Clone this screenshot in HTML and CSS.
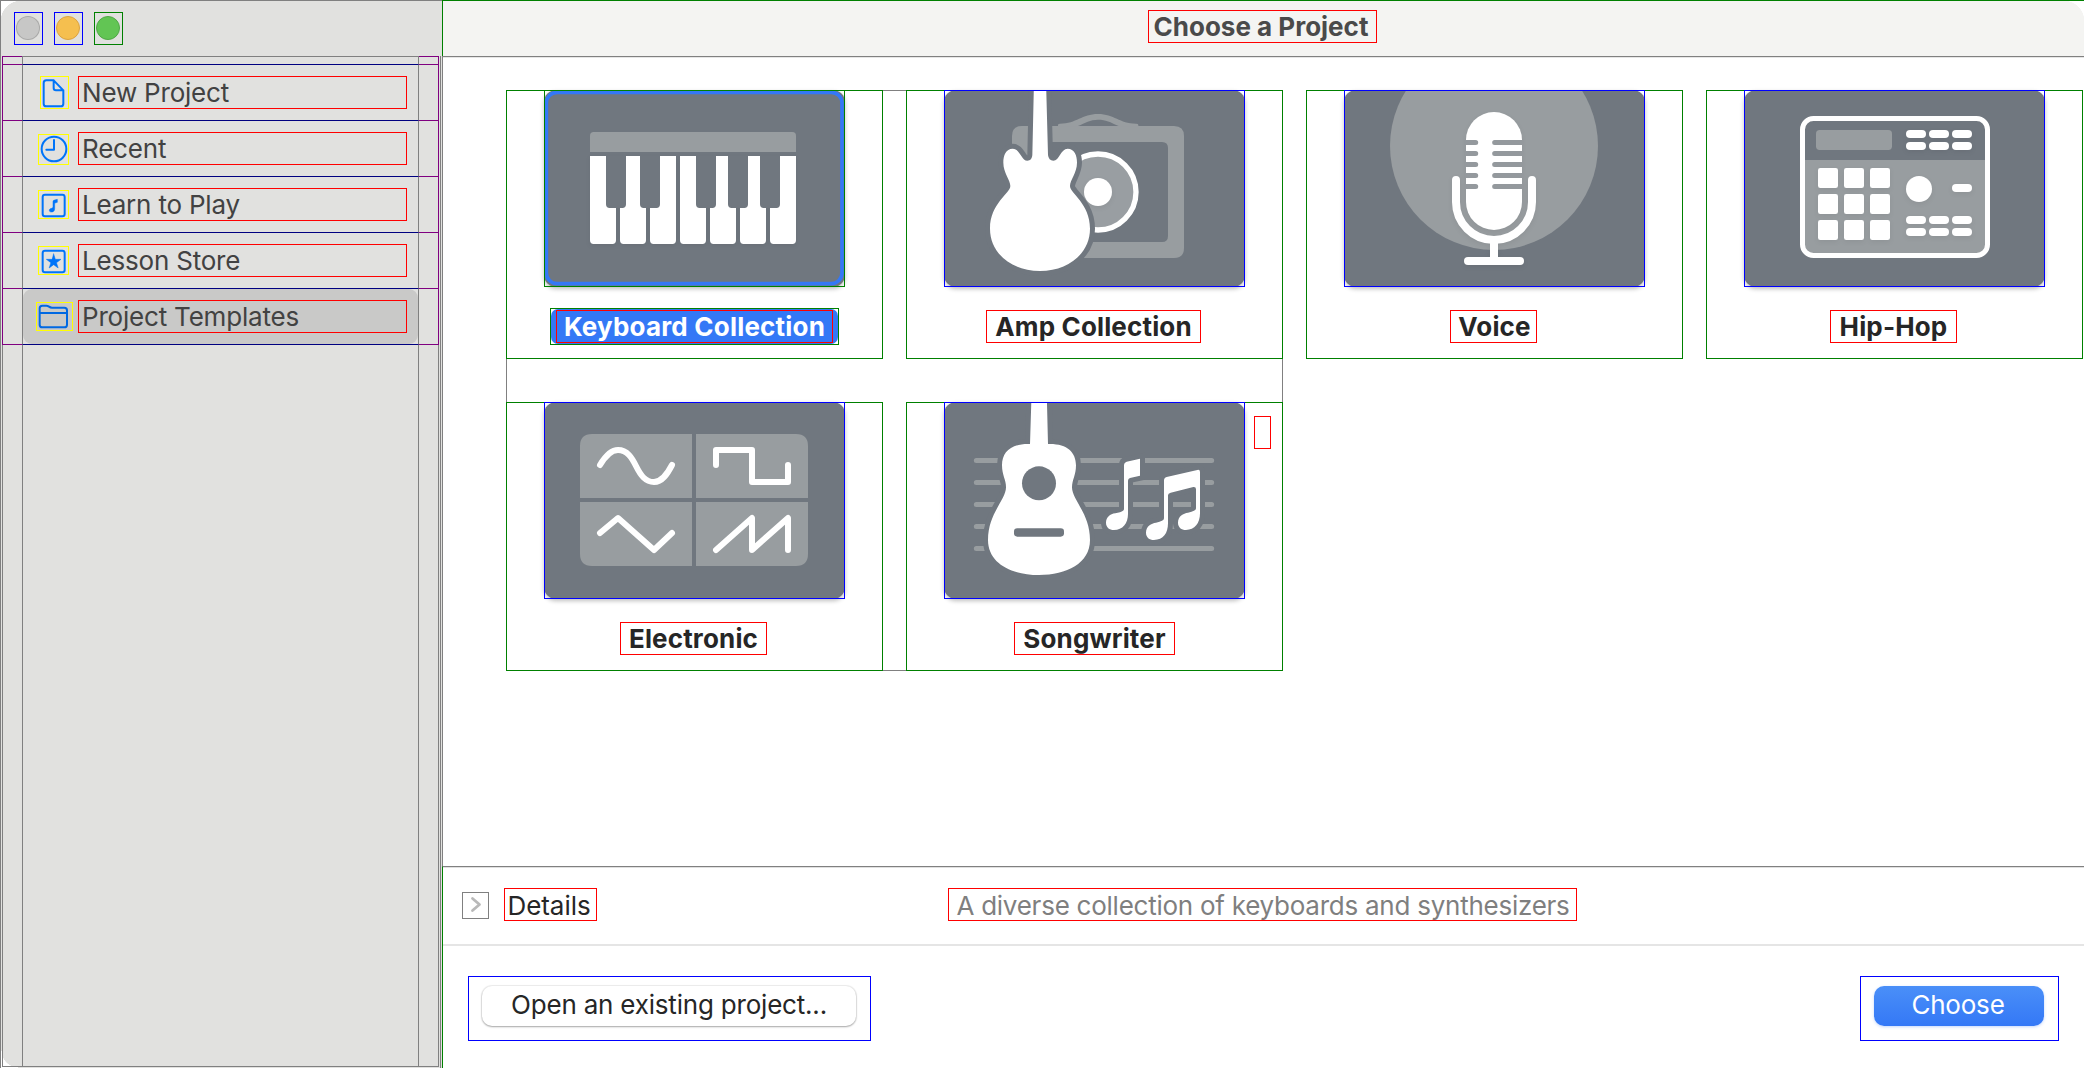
FILE: index.html
```html
<!DOCTYPE html>
<html lang="en">
<head>
<meta charset="utf-8">
<title>Choose a Project</title>
<link rel="stylesheet" href="styles.css">
</head>
<body>
<div class="window">
  <aside class="sidebar">
    <div class="traffic">
      <span class="light close"><i></i></span>
      <span class="light minimize"><i></i></span>
      <span class="light zoom"><i></i></span>
    </div>
    <div class="table">
      <div class="table-head"><div></div></div>
      <ul class="rows">
        <li class="row"><div class="cell">
          <span class="slot"><svg class="icon doc" viewBox="120 228 87 99"><path d="M161 241H139Q131 241 131 249V311Q131 319 139 319H182Q190 319 190 311V271ZM161 241V264Q161 271 168 271H190"/></svg></span>
          <span class="name">New Project</span>
        </div></li>
        <li class="row"><div class="cell">
          <span class="slot"><svg class="icon clock" viewBox="114 402 93 93"><circle cx="162" cy="447" r="37"/><path d="M162 420V449H139"/></svg></span>
          <span class="name">Recent</span>
        </div></li>
        <li class="row"><div class="cell">
          <span class="slot"><svg class="icon square" viewBox="114 570 93 87"><rect x="128" y="584" width="66" height="65" rx="7"/><path class="solid" d="M159 604Q159 602 161 601L172 598V607L165 609Q164 610 164 612V626C164 633 160 636 154 636C150 636 148 634 148 631C148 627 151 626 155 625Q159 624 159 621Z"/></svg></span>
          <span class="name">Learn to Play</span>
        </div></li>
        <li class="row"><div class="cell">
          <span class="slot"><svg class="icon square" viewBox="114 738 93 87"><rect x="128" y="752" width="66" height="65" rx="7"/><path class="solid" d="M161 762L166 778H183L169.500 788L174.500 804L161 794L147.500 804L152.500 788L139 778H156Z"/></svg></span>
          <span class="name">Lesson Store</span>
        </div></li>
        <li class="row selected"><div class="cell">
          <span class="slot"><svg class="icon folder" viewBox="108 906 111 87"><path d="M119 974V925Q119 917 127 917H139Q143 917 147 920Q151 923 156 923H193Q201 923 201 931V974Q201 982 193 982H127Q119 982 119 974ZM119 939H201"/></svg></span>
          <span class="name">Project Templates</span>
        </div></li>
      </ul>
      <div class="table-rest"><div></div></div>
    </div>
  </aside>

  <main class="main">
    <header class="titlebar"><h1 class="tag title">Choose a Project</h1></header>

    <section class="content">
      <div class="cards">
        <article class="card selected">
          <div class="picture">
            <svg viewBox="132 30 903 591">
              <rect class="edge" x="139" y="37" width="887" height="574" rx="32"/>
              <path class="soft" d="M270 216V167Q270 156 281 156H877Q888 156 888 167V216Z"/>
              <g class="white">
                <path d="M270 228H348V481Q348 492 337 492H281Q270 492 270 481ZM360 228H438V481Q438 492 427 492H371Q360 492 360 481ZM450 228H528V481Q528 492 517 492H461Q450 492 450 481ZM540 228H618V481Q618 492 607 492H551Q540 492 540 481ZM630 228H708V481Q708 492 697 492H641Q630 492 630 481ZM720 228H798V481Q798 492 787 492H731Q720 492 720 481ZM810 228H888V481Q888 492 877 492H821Q810 492 810 481Z"/>
              </g>
              <path class="slate" d="M318 226H378V373Q378 384 367 384H329Q318 384 318 373ZM420 226H480V373Q480 384 469 384H431Q420 384 420 373ZM588 226H648V373Q648 384 637 384H599Q588 384 588 373ZM684 226H744V373Q744 384 733 384H695Q684 384 684 373ZM780 226H840V373Q840 384 829 384H791Q780 384 780 373Z"/>
            </svg>
          </div>
          <div class="chip"><span class="tag label kb">Keyboard Collection</span></div>
        </article>

        <article class="card">
          <div class="picture">
            <svg viewBox="132 30 903 591">
              <path class="soft" fill-rule="evenodd" d="M366 138H822Q852 138 852 168V504Q852 534 822 534H366Q336 534 336 504V168Q336 138 366 138ZM384 186V486H786Q804 486 804 468V204Q804 186 786 186Z"/>
              <path class="soft" fill-rule="evenodd" d="M474 139V135Q474 131 480 131C530 131 545 102 594 102C643 102 658 131 708 131Q715 131 715 135V139ZM534 138H656C630 126 618 119 594 119C570 119 556 129 534 138Z"/>
              <circle cx="594" cy="336" r="114" fill="#999ea2" stroke="#fff" stroke-width="16"/>
              <circle class="white" cx="594" cy="336" r="42"/>
              <path class="halo" d="M402 0H438L444 225Q446 242 460 242C478 242 482 206 503 206C523 206 531 226 531 248C531 278 510 300 510 318C510 340 570 370 570 446C570 520 505 573 420 573C335 573 270 520 270 446C270 370 331 340 331 318C331 300 310 278 310 248C310 226 318 206 338 206C360 206 364 242 382 242Q396 242 397 225Z"/>
            </svg>
          </div>
          <span class="tag label amp">Amp Collection</span>
        </article>

        <article class="card">
          <div class="picture">
            <svg viewBox="132 30 903 591">
              <circle class="soft" cx="582" cy="198" r="312"/>
              <g class="white">
                <rect x="498" y="96" width="168" height="354" rx="84"/>
                <path d="M468 300V366A114 114 0 0 0 696 366V300" fill="none" stroke="#fff" stroke-width="24" stroke-linecap="round"/>
                <rect x="570" y="480" width="24" height="60"/>
                <rect x="492" y="531" width="180" height="24" rx="12"/>
              </g>
              <path d="M494 187.500H527M584 187.500H670M494 220.500H527M584 220.500H670M494 253.500H527M584 253.500H670M494 286.500H527M584 286.500H670M494 319.500H527M584 319.500H670" stroke="#94999d" stroke-width="15"/>
              <path d="M527 187.500h.1M584 187.500h.1M527 220.500h.1M584 220.500h.1M527 253.500h.1M584 253.500h.1M527 286.500h.1M584 286.500h.1M527 319.500h.1M584 319.500h.1" stroke="#94999d" stroke-width="15" stroke-linecap="round"/>
            </svg>
          </div>
          <span class="tag label voice">Voice</span>
        </article>

        <article class="card">
          <div class="picture">
            <svg viewBox="180 30 903 591">
              <path class="soft" d="M360 240H906V490Q906 524 872 524H392Q360 524 360 490Z"/>
              <rect class="soft" x="396" y="150" width="228" height="60" rx="11"/>
              <rect x="355.500" y="115.500" width="555" height="411" rx="33" fill="none" stroke="#fff" stroke-width="15"/>
              <g class="white">
                <rect x="402" y="264" width="60" height="60" rx="7"/><rect x="480" y="264" width="60" height="60" rx="7"/><rect x="558" y="264" width="60" height="60" rx="7"/>
                <rect x="402" y="342" width="60" height="60" rx="7"/><rect x="480" y="342" width="60" height="60" rx="7"/><rect x="558" y="342" width="60" height="60" rx="7"/>
                <rect x="402" y="420" width="60" height="60" rx="7"/><rect x="480" y="420" width="60" height="60" rx="7"/><rect x="558" y="420" width="60" height="60" rx="7"/>
                <rect x="666" y="150" width="60" height="24" rx="12"/><rect x="735" y="150" width="60" height="24" rx="12"/><rect x="804" y="150" width="60" height="24" rx="12"/>
                <rect x="666" y="186" width="60" height="24" rx="12"/><rect x="735" y="186" width="60" height="24" rx="12"/><rect x="804" y="186" width="60" height="24" rx="12"/>
                <circle cx="705" cy="327" r="39"/><rect x="804" y="312" width="60" height="24" rx="12"/>
                <rect x="666" y="408" width="60" height="24" rx="12"/><rect x="735" y="408" width="60" height="24" rx="12"/><rect x="804" y="408" width="60" height="24" rx="12"/>
                <rect x="666" y="444" width="60" height="24" rx="12"/><rect x="735" y="444" width="60" height="24" rx="12"/><rect x="804" y="444" width="60" height="24" rx="12"/>
              </g>
            </svg>
          </div>
          <span class="tag label hiphop">Hip-Hop</span>
        </article>

        <article class="card">
          <div class="picture">
            <svg viewBox="132 36 903 591">
              <path class="soft" d="M240 324V168Q240 132 276 132H576V324ZM588 132H888Q924 132 924 168V324H588ZM240 336H576V528H276Q240 528 240 492ZM588 336H924V492Q924 528 888 528H588Z"/>
              <g class="wave">
                <path d="M300 225C318 195 334 180 354 180C382 180 396 204 408 228C422 256 436 276 462 276C486 276 502 252 516 225"/>
                <path d="M648 225V180H756V276H864V225"/>
                <path d="M300 429L354 384L462 480L516 429"/>
                <path d="M648 480L756 384V480L864 384V480"/>
              </g>
            </svg>
          </div>
          <span class="tag label electronic">Electronic</span>
        </article>

        <article class="card">
          <div class="picture">
            <svg viewBox="132 36 903 591">
              <path d="M229 211.500H935M229 277.500H935M229 343.500H935M229 409.500H935M229 475.500H935" stroke="#989da0" stroke-width="15" stroke-linecap="round"/>
              <g>
                <path class="halo" d="M395 0H440L444 162C500 160 528 186 528 226C528 255 516 270 516 292C516 330 570 370 570 450C570 520 500 555 417 555C334 555 264 520 264 450C264 370 318 330 318 292C318 270 306 255 306 226C306 186 334 160 390 162Z"/>
                <path class="halo" d="M672 225Q672 217 680 215L720 206V257L690 264Q684 266 684 272V372C684 400 668 420 642 420C628 420 618 412 618 398C618 382 630 372 646 370L660 367Q672 363 672 357Z"/>
                <path class="halo" d="M792 272Q792 263 800 261L892 240Q900 238 900 246V370C900 400 884 420 858 420C844 420 834 412 834 398C834 378 850 370 864 368Q888 364 888 355V298Q888 290 880 291L812 308Q804 310 804 316V400C804 430 790 450 762 450C748 450 738 442 738 428C738 408 754 400 768 398Q792 394 792 385Z"/>
              </g>
              <circle class="slate" cx="417" cy="280" r="51"/>
              <rect class="slate" x="342" y="415" width="150" height="25" rx="10"/>
            </svg>
          </div>
          <span class="tag label songwriter">Songwriter</span>
          <span class="blank"></span>
        </article>
      </div>
    </section>

    <footer class="footer">
      <div class="details">
        <span class="disclosure"><svg viewBox="0 0 27 27"><path d="M10.500 6.500L17.500 12.500L10.500 18.500"/></svg></span>
        <span class="tag details-label">Details</span>
        <span class="tag summary">A diverse collection of keyboards and synthesizers</span>
      </div>
      <div class="actions">
        <div class="hit"><button class="button open">Open an existing project...</button></div>
        <div class="hit"><button class="button choose">Choose</button></div>
      </div>
    </footer>
  </main>
</div>
</body>
</html>
```
FILE: styles.css
```css
* { box-sizing: border-box; }
body { margin: 0; background: #fff; color: #262626; font: 26px/31px Inter, "Liberation Sans", sans-serif; }
ul { list-style: none; margin: 0; padding: 0; }
h1 { margin: 0; }
svg { display: block; }

.window { display: grid; grid-template-columns: 442px 1fr; width: 2084px; height: 1068px; overflow: hidden; }

/* Sidebar */
.sidebar { display: flex; flex-direction: column; border-top: 1px solid #808080; border-left: 1px solid #808080;
  background: linear-gradient(#808080, #808080) 439px 55px / 1px 1012px no-repeat, #e1e1df;
  padding-left: 1px; position: relative; }
.sidebar::before { content: ""; position: absolute; inset: 0; pointer-events: none;
  background: radial-gradient(circle at 20px 20px, transparent 20px, #fff 20.500px) 0 0 / 20px 20px no-repeat,
    radial-gradient(circle at 17px 0, transparent 16px, #fff 16.500px) 0 100% / 17px 17px no-repeat; }
.traffic { display: flex; gap: 11px; height: 55px; flex: none; padding: 11px 0 0 12px; }
.light { width: 29px; height: 33px; border: 1px solid blue; display: grid; place-items: center; padding: 0 1px 1px 0; }
.light i { width: 24px; height: 24px; border-radius: 50%; border: 1px solid rgba(0,0,0,.15); }
.close i { background: #c7c7c6; }
.minimize i { background: #f5bf4f; border-color: #dba341; }
.zoom i { background: #62c554; border-color: #50a846; }
.zoom { border-color: green; }

.table { width: 437px; height: 1011px; display: flex; flex-direction: column; position: relative; }
.table-head { height: 9px; border: 1px solid purple; padding: 0 19px; }
.table-head div { height: 9px; margin-top: -1px; border: 1px solid #808080; border-bottom-color: navy; }
.row { height: 56px; border: 1px solid purple; border-top: 0; padding: 0 19px; }
.cell { height: 56px; display: flex; align-items: center; padding-left: 13px;
  border: 1px solid #808080; border-top: 0; border-bottom-color: navy; position: relative; z-index: 0; }
.row.selected .cell::before { content: ""; position: absolute; inset: 0; z-index: -1; border-radius: 9px; background: #c9c9c8; }
.slot { width: 37px; margin-right: 5px; display: flex; justify-content: center; flex: none; }
.icon { outline: 1px solid yellow; outline-offset: -1px; fill: none; stroke: #0074f8; stroke-width: 6; stroke-linecap: round; stroke-linejoin: round; }
.icon .solid { fill: #0074f8; stroke-width: 1.500; }
.doc { width: 29px; height: 33px; }
.clock { width: 31px; height: 31px; margin: 2px 2px 0 0; }
.square { width: 31px; height: 29px; margin-right: 2px; }
.folder { width: 37px; height: 29px; stroke: #0068e2; }
.name { width: 329px; height: 33px; border: 1px solid red; padding-left: 3px; color: #424242; letter-spacing: -.2px; }
.table-rest { flex: 1; border: 1px solid #808080; border-top: 0; padding: 0 19px; }
.table-rest div { height: 100%; border: solid #808080; border-width: 0 1px; }

/* Main pane */
.main { display: grid; grid-template-rows: 56px 810px 1fr; min-width: 0; }
.titlebar { border-top: 1px solid green; border-left: 1px solid green; display: flex; justify-content: center; padding: 9px 2px 0 0;
  background: radial-gradient(circle at 0 20px, #f4f4f2 20px, #fff 20.500px) 100% 0 / 20px 20px no-repeat,
    linear-gradient(#f4f4f2, #f4f4f2) 0 0 / calc(100% - 20px) 100% no-repeat,
    linear-gradient(#f4f4f2, #f4f4f2) 0 20px / 100% 100% no-repeat; }
.tag { height: 33px; border: 1px solid red; display: block; text-align: center; white-space: nowrap; font-size: 26px; line-height: 31px; }
.title { width: 229px; font-weight: 700; color: #4a4a4a; padding-right: 3px; }

.content { border-top: 1px solid #808080; border-left: 1px solid #808080; padding: 33px 0 0 63px; box-shadow: inset 0 1px #e6e6e6; }
.cards { display: grid; grid-template: repeat(2, 269px) / repeat(4, 377px); gap: 43px 23px; }
.cards::before { content: ""; grid-area: 1 / 1 / 3 / 3; border: 1px solid #808080; }
.card { grid-row: 1; border: 1px solid green; display: flex; flex-direction: column; align-items: center; position: relative; }
.card:nth-child(1), .card:nth-child(5) { grid-column: 1; }
.card:nth-child(2), .card:nth-child(6) { grid-column: 2; }
.card:nth-child(3) { grid-column: 3; }
.card:nth-child(4) { grid-column: 4; }
.card:nth-child(n+5) { grid-row: 2; }
.picture { width: 301px; height: 197px; margin-top: -1px; flex: none; outline: 1px solid blue; outline-offset: -1px; }
.picture svg { width: 301px; height: 197px; border-radius: 12px; background: #70777f; box-shadow: 0 2px 4px rgba(0,0,0,.25); }
.card.selected .picture { outline-color: green; }
.soft { fill: #989da0; }
.slate { fill: #70777f; }
.white { fill: #fff; filter: drop-shadow(0 6px 8px rgba(0,0,0,.06)); }
.halo { fill: #fff; stroke: #70777f; stroke-width: 30; paint-order: stroke; }
.edge { fill: none; stroke: #3478f6; stroke-width: 11; }
.wave { fill: none; stroke: #fff; stroke-width: 18; stroke-linecap: round; stroke-linejoin: round; }
.label { margin-top: 23px; margin-right: 2px; font-weight: 700; letter-spacing: .15px; }
.chip { width: 289px; height: 37px; margin-top: 21px; border: 1px solid green; padding: 1px 5px; position: relative; z-index: 0; }
.chip::before { content: ""; position: absolute; inset: 0; z-index: -1; border-radius: 7px; background: #3478f6; }
.chip .label { margin: 0; color: #fff; letter-spacing: .2px; }
.amp { width: 215px; }
.voice { width: 87px; padding-left: 2px; }
.hiphop { width: 127px; }
.electronic { width: 147px; }
.songwriter { width: 161px; margin-right: 0; }
.blank { position: absolute; left: 347px; top: 13px; width: 17px; height: 33px; border: 1px solid red; }

/* Footer */
.footer { border-top: 1px solid #808080; border-left: 1px solid green; box-shadow: inset 0 1px #e0e0e0; }
.details { display: flex; align-items: flex-start; height: 79px; padding: 21px 0 0 19px; border-bottom: 2px solid #e5e5e5; }
.disclosure { width: 27px; height: 27px; margin: 4px 15px 0 0; border: 1px solid #808080; }
.disclosure svg { margin: -1px; width: 27px; height: 27px; fill: none; stroke: #b9b9b9; stroke-width: 2.800; stroke-linecap: round; stroke-linejoin: round; }
.details .tag { line-height: 33px; }
.details-label { width: 93px; padding-right: 3px; letter-spacing: -.05px; }
.summary { width: 629px; margin-left: 351px; padding-left: 1px; color: #7f7f7f; letter-spacing: -.25px; }
.actions { display: flex; justify-content: space-between; padding: 30px 25px 0; }
.hit { border: 1px solid blue; height: 65px; padding: 9px 14px 0 13px; }
.button { display: block; height: 40px; border: 0; border-radius: 10px; font: 26px/38px Inter, "Liberation Sans", sans-serif; padding: 0 0 2px; white-space: nowrap; letter-spacing: -.2px; }
.open { width: 374px; color: #262626; background: #fff; box-shadow: 0 0 1px 1px rgba(0,0,0,.07), 0 1px 2px rgba(0,0,0,.3); }
.choose { width: 170px; color: #fff; padding-right: 2px; background: linear-gradient(#4a8ff8, #3478f6); box-shadow: 0 1px 3px rgba(52,120,246,.3); }
```
